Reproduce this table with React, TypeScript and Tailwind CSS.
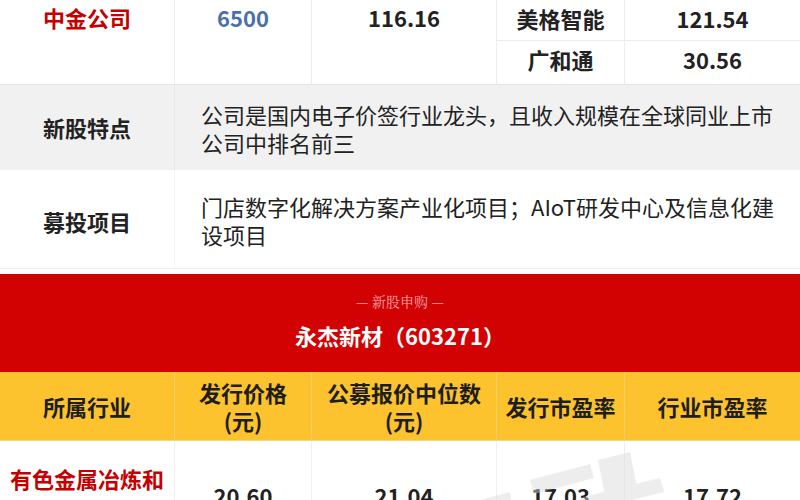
import React from 'react';

const font = { fontFamily: '"Noto Sans CJK SC", "Noto Sans", sans-serif' };

const headers = [
  ['所属行业'],
  ['发行价格', '(元)'],
  ['公募报价中位数', '(元)'],
  ['发行市盈率'],
  ['行业市盈率'],
];

const values = ['20.60', '21.04', '17.03', '17.72'];

const App: React.FC = () => {
  return (
    <div className="relative w-[800px] h-[500px] overflow-hidden bg-white text-[#222]" style={font}>
      {/* comparable companies block */}
      <div className="grid grid-cols-[175px_137px_185px_128px_175px] grid-rows-[41px_43px] h-[85px] border-b border-[#e6e6e6]">
        <div className="row-span-2 border-r border-[#ececec]">
          <div className="h-[35px] flex items-center justify-center text-[22px] font-bold text-[#c40000]">中金公司</div>
        </div>
        <div className="row-span-2 border-r border-[#ececec]">
          <div className="h-[35px] flex items-center justify-center text-[22px] font-semibold text-[#4a70ab]">6500</div>
        </div>
        <div className="row-span-2 border-r border-[#ececec]">
          <div className="h-[35px] flex items-center justify-center text-[22px] font-semibold">116.16</div>
        </div>
        <div className="flex items-center justify-center pb-[4px] border-r border-b border-[#ececec] text-[22px] font-bold">美格智能</div>
        <div className="flex items-center justify-center pb-[4px] border-b border-[#ececec] text-[22px] font-semibold">121.54</div>
        <div className="flex items-center justify-center pb-[7px] border-r border-[#ececec] text-[22px] font-bold">广和通</div>
        <div className="flex items-center justify-center pb-[7px] text-[22px] font-semibold">30.56</div>
      </div>

      {/* 新股特点 */}
      <div className="flex h-[85px] bg-[#f1f1f1]">
        <div className="w-[175px] shrink-0 flex items-center justify-center border-r border-[#e9e9e9] text-[22px] font-bold">新股特点</div>
        <div className="flex items-center pl-[26px]">
          <p className="w-[578px] text-[22px] leading-[28px]">
            公司是国内电子价签行业龙头，且收入规模在全球同业上市公司中排名前三
          </p>
        </div>
      </div>

      {/* 募投项目 */}
      <div className="flex h-[99px] bg-white border-b border-[#eeeeee]">
        <div className="w-[175px] shrink-0 flex items-center justify-center pt-[4px] border-r border-[#f4f4f4] text-[22px] font-bold">募投项目</div>
        <div className="flex items-center pl-[26px] pt-[2px]">
          <p className="w-[578px] text-[22px] leading-[28px]">
            门店数字化解决方案产业化项目；AIoT研发中心及信息化建设项目
          </p>
        </div>
      </div>

      <div className="h-[5px] bg-white" />

      {/* red banner */}
      <div className="h-[98px] bg-[#d20203] flex flex-col items-center pt-[18px]">
        <div className="text-[14px] leading-[19px] text-[#f3a5a5]" style={{ fontFamily: '"Noto Serif CJK SC", "Noto Sans CJK SC", serif' }}>— 新股申购 —</div>
        <div className="mt-[10px] text-[22px] leading-[28px] font-bold text-white">永杰新材（603271）</div>
      </div>

      {/* yellow header */}
      <div className="grid grid-cols-[175px_137px_185px_128px_175px] h-[69px] bg-[#fcc32e] border-b border-[#f7d77a]">
        {headers.map((lines, i) => (
          <div key={i} className={`flex flex-col items-center justify-center text-[22px] leading-[28px] font-bold text-[#1e1e1e] ${i < 4 ? 'border-r border-[#f3cf6a]' : ''}`}>
            {lines.map((l) => (
              <span key={l}>{l}</span>
            ))}
          </div>
        ))}
      </div>

      {/* data row */}
      <div className="grid grid-cols-[175px_137px_185px_128px_175px] h-[80px]">
        <div className="border-r border-[#efefef] pt-[23px] text-center text-[22px] leading-[28px] font-bold text-[#c40000]">
          有色金属冶炼和
        </div>
        {values.map((v, i) => (
          <div key={v} className={`pt-[40px] text-center text-[22px] leading-[28px] font-semibold ${i < 3 ? 'border-r border-[#efefef]' : ''}`}>
            {v}
          </div>
        ))}
      </div>

      {/* faint watermark */}
      <svg className="absolute left-[470px] top-[452px] pointer-events-none" width="200" height="60" viewBox="0 0 200 60">
        <g fill="#d9d9d9" opacity="0.45">
          <polygon points="10,48 40,40 44,60 14,60" />
          <polygon points="60,28 120,12 124,26 64,42" />
          <polygon points="128,8 160,0 168,40 136,48" />
          <polygon points="110,46 190,26 194,40 114,60" />
        </g>
      </svg>
    </div>
  );
};

export default App;
